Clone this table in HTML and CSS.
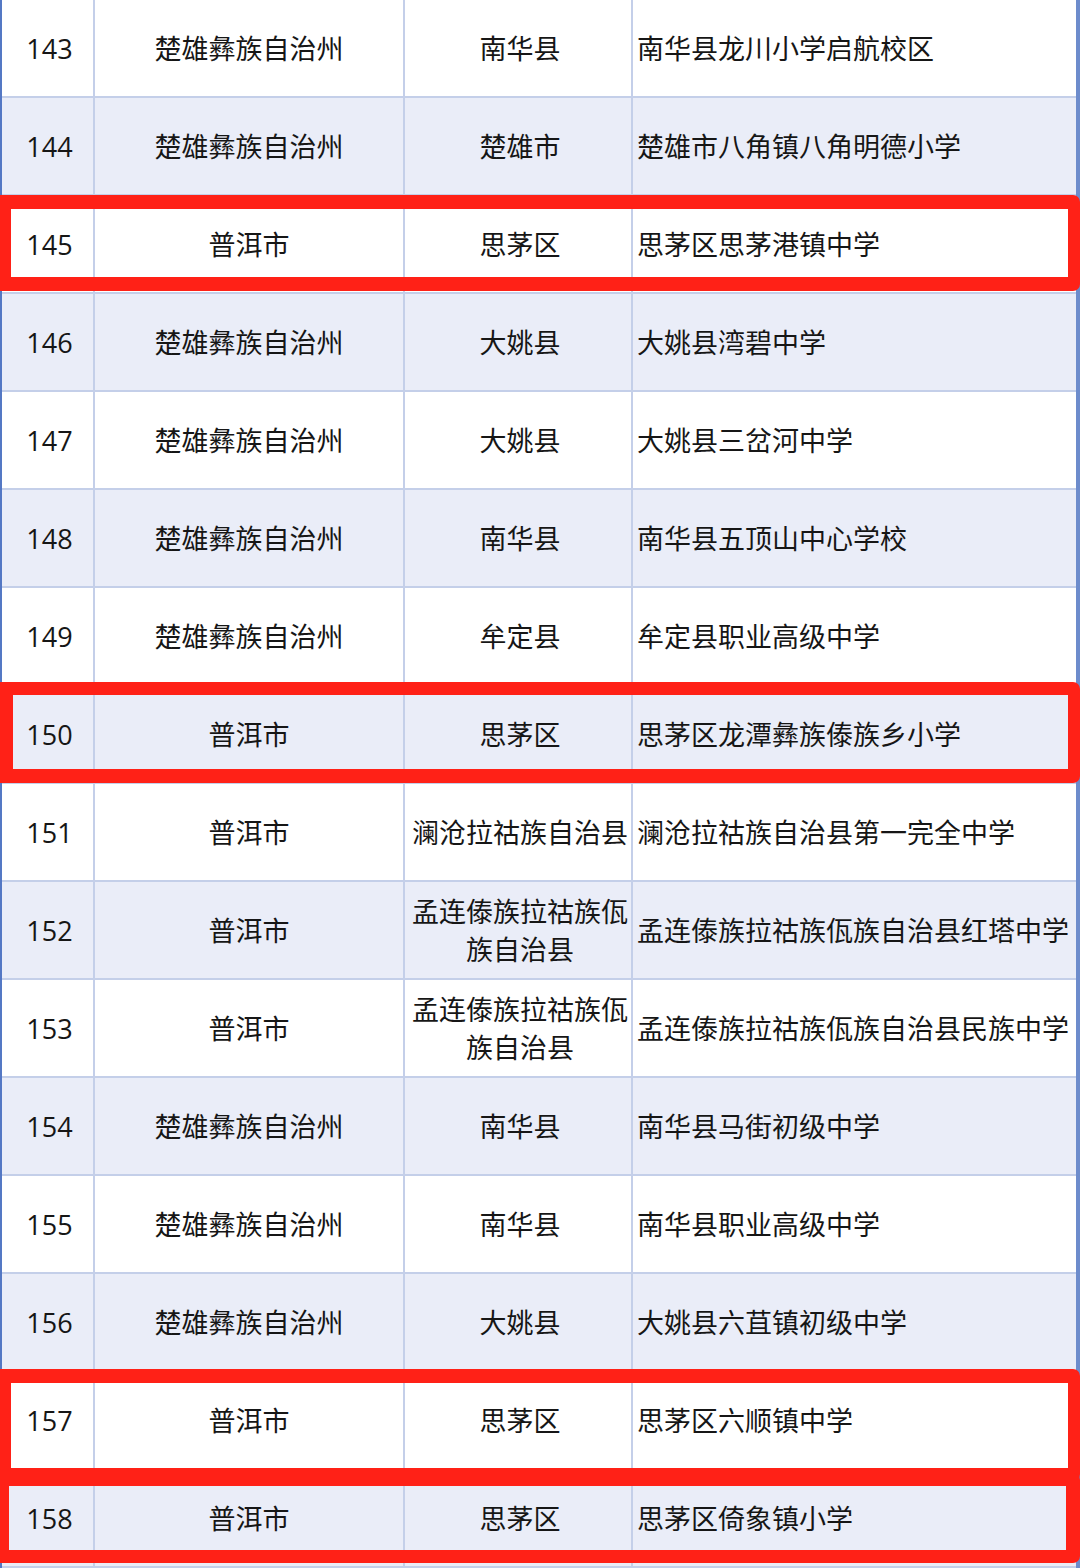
FILE: index.html
```html
<!DOCTYPE html>
<html lang="zh">
<head>
<meta charset="utf-8">
<link rel="stylesheet" href="styles.css">
</head>
<body>
<div class="wrap">
<table class="list">
<colgroup><col class="c1"><col class="c2"><col class="c3"><col class="c4"></colgroup>
<tbody>
<tr><td class="num">143</td><td class="ctr">楚雄彝族自治州</td><td class="ctr mid">南华县</td><td class="name">南华县龙川小学启航校区</td></tr>
<tr class="alt"><td class="num">144</td><td class="ctr">楚雄彝族自治州</td><td class="ctr mid">楚雄市</td><td class="name">楚雄市八角镇八角明德小学</td></tr>
<tr><td class="num">145</td><td class="ctr">普洱市</td><td class="ctr mid">思茅区</td><td class="name">思茅区思茅港镇中学</td></tr>
<tr class="alt"><td class="num">146</td><td class="ctr">楚雄彝族自治州</td><td class="ctr mid">大姚县</td><td class="name">大姚县湾碧中学</td></tr>
<tr><td class="num">147</td><td class="ctr">楚雄彝族自治州</td><td class="ctr mid">大姚县</td><td class="name">大姚县三岔河中学</td></tr>
<tr class="alt"><td class="num">148</td><td class="ctr">楚雄彝族自治州</td><td class="ctr mid">南华县</td><td class="name">南华县五顶山中心学校</td></tr>
<tr><td class="num">149</td><td class="ctr">楚雄彝族自治州</td><td class="ctr mid">牟定县</td><td class="name">牟定县职业高级中学</td></tr>
<tr class="alt"><td class="num">150</td><td class="ctr">普洱市</td><td class="ctr mid">思茅区</td><td class="name">思茅区龙潭彝族傣族乡小学</td></tr>
<tr><td class="num">151</td><td class="ctr">普洱市</td><td class="ctr mid">澜沧拉祜族自治县</td><td class="name">澜沧拉祜族自治县第一完全中学</td></tr>
<tr class="alt"><td class="num">152</td><td class="ctr">普洱市</td><td class="ctr mid">孟连傣族拉祜族佤族自治县</td><td class="name">孟连傣族拉祜族佤族自治县红塔中学</td></tr>
<tr><td class="num">153</td><td class="ctr">普洱市</td><td class="ctr mid">孟连傣族拉祜族佤族自治县</td><td class="name">孟连傣族拉祜族佤族自治县民族中学</td></tr>
<tr class="alt"><td class="num">154</td><td class="ctr">楚雄彝族自治州</td><td class="ctr mid">南华县</td><td class="name">南华县马街初级中学</td></tr>
<tr><td class="num">155</td><td class="ctr">楚雄彝族自治州</td><td class="ctr mid">南华县</td><td class="name">南华县职业高级中学</td></tr>
<tr class="alt"><td class="num">156</td><td class="ctr">楚雄彝族自治州</td><td class="ctr mid">大姚县</td><td class="name">大姚县六苴镇初级中学</td></tr>
<tr><td class="num">157</td><td class="ctr">普洱市</td><td class="ctr mid">思茅区</td><td class="name">思茅区六顺镇中学</td></tr>
<tr class="alt"><td class="num">158</td><td class="ctr">普洱市</td><td class="ctr mid">思茅区</td><td class="name">思茅区倚象镇小学</td></tr>
</tbody>
</table>
<div class="mark m145"></div>
<div class="mark m150"></div>
<div class="mark m157"></div>
<div class="mark m158"></div>
</div>
</body>
</html>
```

FILE: styles.css
```css
html, body {
  margin: 0;
  padding: 0;
  background: #ffffff;
}
body {
  width: 1080px;
  height: 1568px;
  overflow: hidden;
  font-family: "Noto Sans", "Noto Sans CJK SC", sans-serif;
  color: #161616;
}
.wrap {
  position: relative;
  width: 1080px;
  height: 1568px;
  border-left: 2px solid #5478c4;
  border-right: 4px solid #6d8ccc;
  box-sizing: border-box;
}
.list {
  border-collapse: collapse;
  table-layout: fixed;
  width: 1074px;
}
.c1 { width: 92px; }
.c2 { width: 310px; }
.c3 { width: 228px; }
.c4 { width: 444px; }
.list td {
  height: 96px;
  padding: 0;
  border-bottom: 2px solid #c4cfe9;
  border-right: 2px solid #c4cfe9;
  vertical-align: middle;
  box-sizing: content-box;
}
.list td:last-child { border-right: none; }
.list tr.alt td { background: #eaedf8; }
.num {
  text-align: center;
  font-family: "Open Sans", "Noto Sans", sans-serif;
  font-size: 27px;
  padding-left: 4px !important;
}
.ctr {
  text-align: center;
  font-family: "Noto Sans CJK SC", sans-serif;
  font-size: 27px;
  line-height: 38px;
  padding: 0 4px !important;
}
.ctr.mid {
  padding: 0 2px 0 6px !important;
}
.name {
  text-align: left;
  font-family: "Noto Sans CJK SC", sans-serif;
  font-size: 27px;
  line-height: 38px;
  padding-left: 4px !important;
  white-space: nowrap;
}
.mark {
  position: absolute;
  left: -2px;
  box-sizing: border-box;
  border-style: solid;
  border-color: #ff2117;
  border-radius: 0 7px 7px 0;
}
.m145 {
  top: 195px;
  height: 96px;
  width: 1080px;
  border-width: 14px 12px 14px 11px;
}
.m150 {
  top: 682px;
  height: 101px;
  width: 1080px;
  border-width: 13px 12px 14px 13px;
}
.m157 {
  top: 1369px;
  height: 112px;
  width: 1080px;
  border-width: 14px 12px 13px 11px;
}
.m158 {
  top: 1473px;
  height: 90px;
  width: 1080px;
  border-width: 13px 14px 13px 9px;
}
```
